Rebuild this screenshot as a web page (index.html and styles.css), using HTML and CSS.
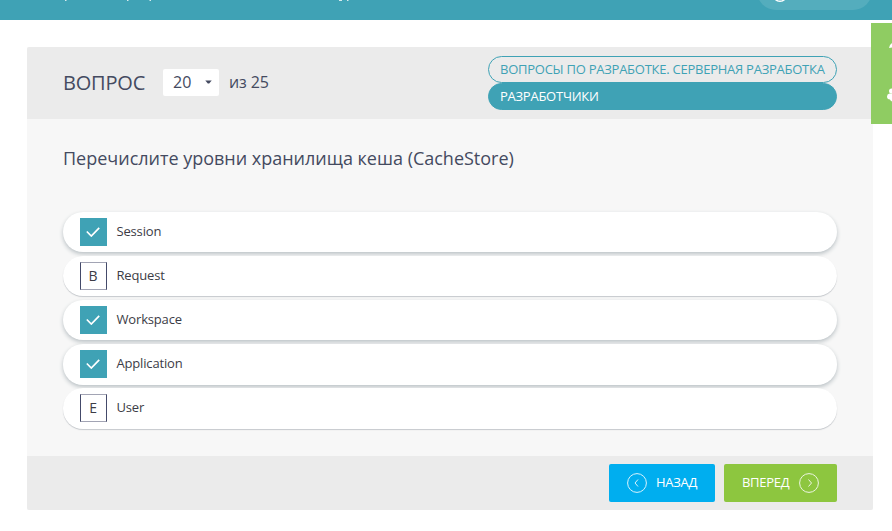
FILE: index.html
```html
<!DOCTYPE html>
<html lang="ru">
<head>
<meta charset="utf-8">
<title>Вопрос 20 из 25</title>
<link rel="stylesheet" href="styles.css">
</head>
<body>
<header class="topbar">
  <svg class="topbar-marks" width="400" height="1" viewBox="0 0 400 1" fill="#d5ebef"><path d="M65 0h1.500v1H65zM127 0h1.500v1H127zM149.500 0h1.500v1h-1.500zM339 0h3v1h-3zM347 0h1.500v1H347z"/></svg>
  <div class="user-pill"><svg width="16" height="16" viewBox="0 0 16 16" fill="none" stroke="#fff" stroke-width="1.400"><circle cx="8" cy="8" r="7.200"/></svg></div>
</header>
<main class="card">
  <section class="card-head">
    <h1>ВОПРОС</h1>
    <div class="select"><span>20</span><svg width="7" height="4" viewBox="0 0 7 4"><path d="M.3.500H6.700L4.200 3.400H2.800z" fill="#444a60"/></svg></div>
    <span class="total">из 25</span>
    <div class="tags">
      <div class="tag">ВОПРОСЫ ПО РАЗРАБОТКЕ. СЕРВЕРНАЯ РАЗРАБОТКА</div>
      <div class="tag filled">РАЗРАБОТЧИКИ</div>
    </div>
  </section>
  <section class="card-body">
    <h2>Перечислите уровни хранилища кеша (CacheStore)</h2>
    <ul class="answers">
      <li class="answer chosen"><span class="box"><svg width="14" height="10" viewBox="0 0 14 10"><path d="M.8 4.500 5.300 9 13.200.8"/></svg></span><span>Session</span></li>
      <li class="answer"><span class="box">B</span><span>Request</span></li>
      <li class="answer chosen"><span class="box"><svg width="14" height="10" viewBox="0 0 14 10"><path d="M.8 4.500 5.300 9 13.200.8"/></svg></span><span>Workspace</span></li>
      <li class="answer chosen tall"><span class="box"><svg width="14" height="10" viewBox="0 0 14 10"><path d="M.8 4.500 5.300 9 13.200.8"/></svg></span><span>Application</span></li>
      <li class="answer tall"><span class="box">E</span><span>User</span></li>
    </ul>
  </section>
  <footer class="card-foot">
    <button class="btn back"><svg width="20" height="20" viewBox="0 0 20 20"><circle cx="10" cy="10" r="9.400"/><path d="M11 6.500 8 10l3 3.500"/></svg><span>НАЗАД</span></button>
    <button class="btn next"><span>ВПЕРЕД</span><svg width="20" height="20" viewBox="0 0 20 20"><circle cx="10" cy="10" r="9.400"/><path d="M9.500 6.500l3 3.500-3 3.500"/></svg></button>
  </footer>
</main>
<aside class="side-tab">
  <svg width="21" height="101" viewBox="0 0 21 101" fill="#fff"><path d="M18 25q.5-3.500 3-5v4.500z"/><circle cx="20.500" cy="68" r="2.500"/><path d="M16 73.500q0-2.500 2.500-3H21v8q-1.500-.5-2-2-3 0-3-3z"/></svg>
</aside>
</body>
</html>
```
FILE: styles.css
```css
* { box-sizing: border-box; }
body {
  margin: 0;
  height: 531px;
  overflow: hidden;
  background: #fff;
  color: #444a60;
  font-family: "Open Sans", sans-serif;
}
.topbar {
  height: 20px;
  padding-right: 20px;
  background: #3fa2b5;
  display: flex;
  justify-content: space-between;
  align-items: flex-start;
  overflow: hidden;
}
.topbar-marks { display: block; }
.user-pill {
  width: 115px;
  height: 38px;
  margin-top: -28px;
  padding: 14px 0 0 15px;
  border-radius: 19px;
  background: #54adbd;
}
.user-pill svg { display: block; }
.card {
  width: 846px;
  margin: 27px 0 0 27px;
  border-radius: 2px;
  overflow: hidden;
  background: #f7f7f7;
}
.card-head {
  height: 72px;
  padding: 0 36px;
  background: #ebebeb;
  display: flex;
  align-items: center;
}
h1 { margin: 0; width: 100px; font-size: 20px; line-height: 28px; font-weight: 400; letter-spacing: -.2px; }
.select {
  width: 56px;
  height: 27px;
  margin-top: -1px;
  padding: 0 7px 1px 10px;
  border-radius: 2px;
  background: #fff;
  display: flex;
  align-items: center;
  justify-content: space-between;
  font-size: 16px;
}
.total { margin: -2px 0 0 10px; font-size: 16px; letter-spacing: -.1px; }
.tags { width: 349px; margin-left: auto; }
.tag {
  height: 27px;
  padding-left: 11px;
  border: 1px solid #3fa2b5;
  border-radius: 14px;
  color: #3fa2b5;
  font-size: 13px;
  line-height: 25px;
  letter-spacing: -.25px;
  white-space: nowrap;
}
.filled { background: #3fa2b5; color: #fff; }
.card-body { height: 337px; padding: 26px 36px 0; }
h2 { margin: 0; font-size: 18px; line-height: 26px; font-weight: 400; letter-spacing: -.01px; white-space: nowrap; }
.answers {
  margin: 41px 0 0;
  padding: 0;
  list-style: none;
  display: grid;
  gap: 4px;
}
.answer {
  height: 40px;
  padding-left: 17px;
  border-radius: 20px;
  background: #fff;
  box-shadow: 0 1px 1px #c5c8cc;
  display: flex;
  align-items: center;
  gap: 9.5px;
  color: #3c3c46;
  font-size: 13px;
  letter-spacing: -.17px;
}
.answer > span:last-child { margin-top: -2px; }
.chosen { box-shadow: 0 2px 4px #b9c0c4; }
.tall { height: 41px; padding-bottom: 1px; margin-bottom: -1px; }
.box {
  width: 27px;
  height: 28px;
  padding: 0 1px 1px 0;
  border: 1px solid #444a6a;
  border-top-color: #a2a4b4;
  border-bottom-color: #a2a4b4;
  display: flex;
  align-items: center;
  justify-content: center;
  font-size: 14px;
}
.chosen .box { background: #3fa2b5; border-color: #3fa2b5; }
.box svg { fill: none; stroke: #fff; stroke-width: 1.7; }
.card-foot {
  height: 54px;
  padding: 0 36px;
  background: #ebebeb;
  display: flex;
  align-items: center;
  justify-content: flex-end;
  gap: 9px;
}
.btn {
  height: 38px;
  padding: 0 18px 2px;
  border: 0;
  border-radius: 2px;
  color: #fff;
  font: 400 13px "Open Sans", sans-serif;
  letter-spacing: -.3px;
  display: flex;
  align-items: center;
  justify-content: space-between;
}
.btn svg { margin-top: 2px; fill: none; stroke: #fff; stroke-width: 1; opacity: .85; }
.back { width: 106px; background: #00aeef; }
.next { width: 113px; background: #8dc63f; }
.side-tab {
  position: absolute;
  top: 23px;
  right: 0;
  width: 21px;
  height: 101px;
  background: #8fcc62;
}
```
